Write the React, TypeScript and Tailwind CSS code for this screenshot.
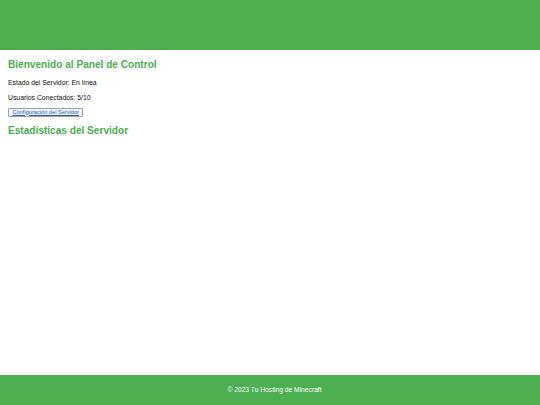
export default function App() {
  return (
    <div className="flex min-h-[405px] flex-col bg-white font-['Liberation_Sans',Arial,sans-serif]">
      <header className="h-[50px] bg-[#4CAF50]" />
      <main className="flex-1 px-2 pt-[9px]">
        <h2 className="text-[10.1px] font-bold leading-[12px] text-[#4CAF50]">Bienvenido al Panel de Control</h2>
        <p className="mt-[6.5px] text-[6.85px] leading-[9px] text-[#111]">Estado del Servidor: En línea</p>
        <p className="mt-[6px] text-[6.85px] leading-[9px] text-[#111]">Usuarios Conectados: 5/10</p>
        <button className="mt-[6px] flex h-[9px] items-center rounded-[1px] border border-[#8fa5c8] bg-[#f3f5f8] px-[3.5px] text-[5.65px] leading-[7px]">
          <a href="#" className="text-[#2a5bc4] underline">Configuración del Servidor</a>
        </button>
        <h2 className="mt-[8.5px] text-[10.1px] font-bold leading-[12px] text-[#4CAF50]">Estadísticas del Servidor</h2>
      </main>
      <footer className="flex h-[30px] items-center justify-center bg-[#4CAF50] pl-[9px] text-[6.7px] text-white">
        © 2023 Tu Hosting de Minecraft
      </footer>
    </div>
  );
}
